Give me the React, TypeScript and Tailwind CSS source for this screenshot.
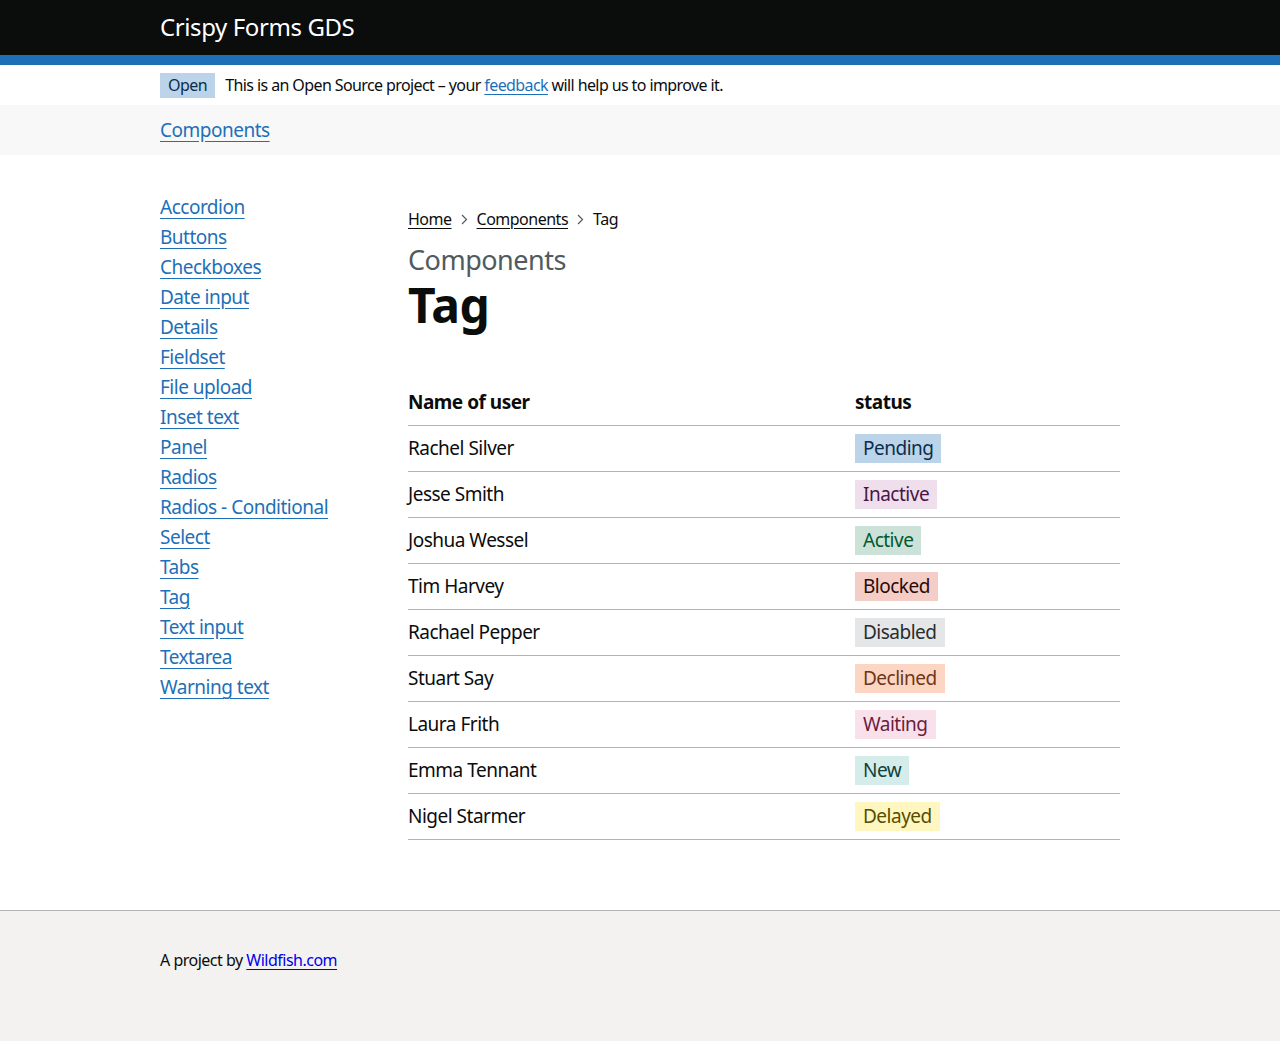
import React from 'react'

const font = { fontFamily: '"Noto Sans", Arial, sans-serif' }

const sideLinks = [
  'Accordion',
  'Buttons',
  'Checkboxes',
  'Date input',
  'Details',
  'Fieldset',
  'File upload',
  'Inset text',
  'Panel',
  'Radios',
  'Radios - Conditional',
  'Select',
  'Tabs',
  'Tag',
  'Text input',
  'Textarea',
  'Warning text',
]

const rows = [
  { name: 'Rachel Silver', status: 'Pending', tag: 'bg-[#bbd4ea] text-[#0c2d4a]' },
  { name: 'Jesse Smith', status: 'Inactive', tag: 'bg-[#efdfed] text-[#491644]' },
  { name: 'Joshua Wessel', status: 'Active', tag: 'bg-[#cce2d8] text-[#005a30]' },
  { name: 'Tim Harvey', status: 'Blocked', tag: 'bg-[#f4cdc6] text-[#2a0b06]' },
  { name: 'Rachael Pepper', status: 'Disabled', tag: 'bg-[#e5e6e7] text-[#282d30]' },
  { name: 'Stuart Say', status: 'Declined', tag: 'bg-[#fcd6c3] text-[#6e3619]' },
  { name: 'Laura Frith', status: 'Waiting', tag: 'bg-[#f9e1ec] text-[#6b1c40]' },
  { name: 'Emma Tennant', status: 'New', tag: 'bg-[#d4ecea] text-[#10403c]' },
  { name: 'Nigel Starmer', status: 'Delayed', tag: 'bg-[#fff7bf] text-[#594d00]' },
]

function Chevron() {
  return (
    <svg width="7" height="11" viewBox="0 0 7 11" className="mx-[9px] inline-block">
      <path d="M1 1l4.5 4.5L1 10" fill="none" stroke="#505a5f" strokeWidth="1.2" />
    </svg>
  )
}

export default function App() {
  return (
    <div className="min-h-[1041px] flex flex-col bg-white text-[#0b0c0c] tracking-[-0.5px]" style={font}>
      {/* Header */}
      <header className="bg-[#0b0c0c] h-[55px]">
        <div className="w-[960px] mx-auto h-full flex items-center pb-[2px]">
          <span className="text-white text-[24px] leading-[30px] tracking-[-0.4px]">Crispy Forms GDS</span>
        </div>
      </header>
      <div className="h-[10px] bg-[#1d70b8]" />

      {/* Phase banner */}
      <div className="h-[40px]">
        <div className="w-[960px] mx-auto h-full flex items-center">
          <span className="bg-[#bbd4ea] text-[#0c2d4a] text-[16px] leading-[20px] px-[8px] pt-[2px] pb-[3px] mr-[10px]">
            Open
          </span>
          <span className="text-[16px] leading-[20px] tracking-[-0.6px]">
            This is an Open Source project – your{' '}
            <a href="#" className="text-[#1d70b8] underline underline-offset-[3px]">feedback</a>{' '}
            will help us to improve it.
          </span>
        </div>
      </div>

      {/* Sub nav */}
      <nav className="bg-[#f8f8f8] h-[50px]">
        <div className="w-[960px] mx-auto h-full flex items-center">
          <a href="#" className="text-[#1d70b8] text-[19px] leading-[25px] underline underline-offset-[4px]">Components</a>
        </div>
      </nav>

      {/* Main */}
      <div className="w-[960px] mx-auto flex pt-[40px] pb-[70px]">
        <ul className="w-[248px] shrink-0">
          {sideLinks.map((l) => (
            <li key={l} className="mb-[5px] text-[19px] leading-[25px]">
              <a href="#" className="text-[#1d70b8] underline underline-offset-[4px]">{l}</a>
            </li>
          ))}
        </ul>

        <main className="flex-1">
          <div className="mt-[14px] flex items-center text-[16px] leading-[20px]">
            <a href="#" className="underline underline-offset-[3px]">Home</a>
            <Chevron />
            <a href="#" className="underline underline-offset-[3px]">Components</a>
            <Chevron />
            <span>Tag</span>
          </div>

          <p className="mt-[16px] text-[27px] leading-[30px] text-[#505a5f]">Components</p>
          <h1 className="mt-[5px] mb-[50px] text-[48px] leading-[50px] font-bold">Tag</h1>

          <table className="w-full border-collapse text-[19px] leading-[25px]">
            <thead>
              <tr className="border-b border-[#b1b4b6]">
                <th className="text-left font-bold py-[10px] w-[447px]">Name of user</th>
                <th className="text-left font-bold py-[10px]">status</th>
              </tr>
            </thead>
            <tbody>
              {rows.map((r) => (
                <tr key={r.name} className="border-b border-[#b1b4b6]">
                  <td className="py-[10px]">{r.name}</td>
                  <td className="py-[8px]">
                    <span className={`inline-block px-[8px] pt-[2px] pb-[2px] ${r.tag}`}>{r.status}</span>
                  </td>
                </tr>
              ))}
            </tbody>
          </table>
        </main>
      </div>

      {/* Footer */}
      <footer className="flex-1 bg-[#f3f2f1] border-t border-[#b1b4b6] pt-[39px] pb-[60px]">
        <div className="w-[960px] mx-auto text-[16px] leading-[20px]">
          A project by{' '}
          <a href="#" className="text-[#0000ee] underline underline-offset-[3px]">Wildfish.com</a>
        </div>
      </footer>
    </div>
  )
}
